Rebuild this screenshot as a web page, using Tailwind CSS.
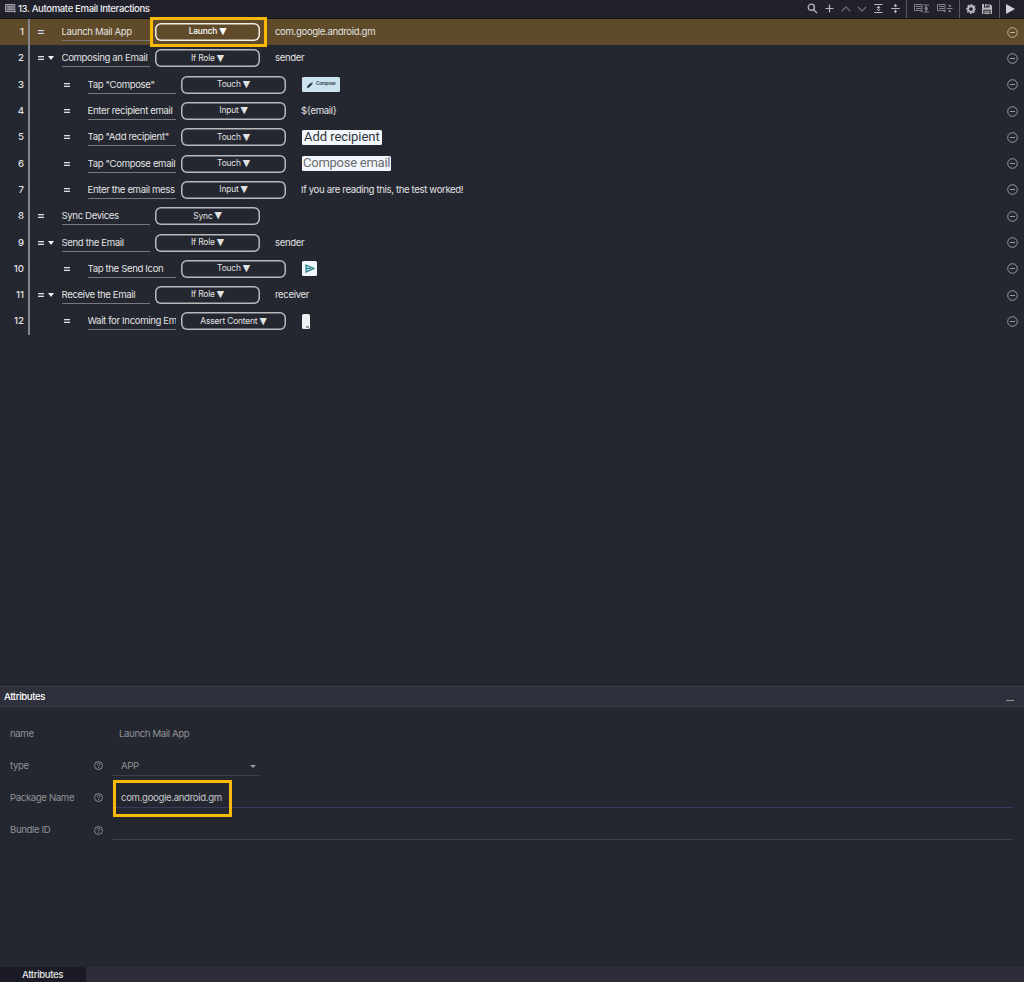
<!DOCTYPE html>
<html lang="en">
<head>
    <meta charset="UTF-8">
    <meta name="viewport" content="width=device-width, initial-scale=1.0">
    <title>13. Automate Email Interactions</title>
    <script src="https://cdn.jsdelivr.net/npm/@tailwindcss/browser@4"></script>
</head>
<body class="bg-[#24272f] text-[#e2e2e3] font-['Inter',sans-serif] text-[9.6px] leading-[14px] tracking-[-0.36px] overflow-hidden">

    <div id="app" class="flex flex-col h-[982px]">

        <header class="flex items-center h-[19px] shrink-0 bg-[#20212a] border-b border-[#16171e]">
            <svg class="ml-[5px] w-[11px] h-[9px] mb-[2px]" viewBox="0 0 11 9" fill="none" stroke="#a2a2a6"><path d="M.5.5h9.300v7H.5z" fill="#55565d"/><path d="M2 2.500h6.500M2 4h6.500M2 5.500h6.500" stroke-width=".9"/><path d="M8 7l2.500 2V7z" fill="#a2a2a6" stroke="none"/></svg>
            <h1 class="ml-[2px] mb-px font-medium text-[#ececee] tracking-[-0.38px]">13. Automate Email Interactions</h1>
            <div class="ml-auto flex items-center h-full text-[#b8b8bc]">
                <span class="w-[18px] mb-px flex justify-center"><svg class="w-[11px] h-[11px]" viewBox="0 0 11 11" fill="none" stroke="currentColor" stroke-width="1.300"><circle cx="4.300" cy="4.300" r="3.100"/><path d="M6.700 6.700l3.400 3.400"/></svg></span>
                <span class="w-[17px] mb-px flex justify-center"><svg class="w-[9px] h-[9px]" viewBox="0 0 9 9" fill="none" stroke="currentColor" stroke-width="1.200"><path d="M4.500.5v8M.5 4.500h8"/></svg></span>
                <span class="w-[16px] mb-px flex justify-center text-[#68696f]"><svg class="w-[10px] h-[6px]" viewBox="0 0 10 6" fill="none" stroke="currentColor" stroke-width="1.300"><path d="M.7 5.200L5 1l4.300 4.200"/></svg></span>
                <span class="w-[16px] mb-px flex justify-center text-[#68696f]"><svg class="w-[10px] h-[6px]" viewBox="0 0 10 6" fill="none" stroke="currentColor" stroke-width="1.300"><path d="M.7.8L5 5 9.300.8"/></svg></span>
                <span class="w-[17px] mb-px flex justify-center"><svg class="w-[9px] h-[9px]" viewBox="0 0 9 9" fill="none" stroke="currentColor"><path d="M.3.5h8.400M.3 8.500h8.400"/><path d="M4 3h1v3H4zM4.500 1.700L6.500 4h-4zM4.500 7.300L6.500 5h-4z" fill="currentColor" stroke="none"/></svg></span>
                <span class="w-[19px] mb-px flex justify-start pl-[4px]"><svg class="w-[9px] h-[9px]" viewBox="0 0 9 9" fill="none" stroke="currentColor"><path d="M.3 4.500h8.400"/><path d="M3.900 0h1.200v1.300h1.300L4.500 3.500 2.600 1.300h1.300zM3.900 9h1.200V7.700h1.300L4.500 5.500 2.600 7.700h1.300z" fill="currentColor" stroke="none"/></svg></span>
                <span class="w-px h-full bg-[#595a60]"></span>
                <span class="w-[28px] mb-px flex justify-center text-[#85868c]"><svg class="w-[15px] h-[9px]" viewBox="0 0 15 9" fill="none" stroke="currentColor"><path d="M.5.5h7.500v6H.5z"/><path d="M2 2.500h5M2 4.500h5"/><path d="M6 7h2.500v1.500z" fill="currentColor" stroke="none"/><path d="M9.500 1H15M9.500 8H15M12.200 1.500v6"/><path d="M12.200 2l1.900 2.500-1.900 2.500-1.900-2.500z" fill="currentColor" stroke="none"/></svg></span>
                <span class="w-[24px] mb-px flex justify-start pl-[2px] text-[#85868c]"><svg class="w-[16px] h-[9px]" viewBox="0 0 16 9" fill="none" stroke="currentColor"><path d="M.5.5h7.500v6H.5z"/><path d="M2 2.500h5M2 4.500h5"/><path d="M6 7h2.500v1.500z" fill="currentColor" stroke="none"/><path d="M10 4.500h5.500"/><path d="M11 1h3.500l-1.700 2.400zM11 8h3.500l-1.700-2.400z" fill="currentColor" stroke="none"/></svg></span>
                <span class="w-px h-full bg-[#595a60]"></span>
                <span class="w-[21px] mb-px flex justify-center"><svg class="w-[10px] h-[10px]" viewBox="0 0 10 10" fill="none" stroke="currentColor"><circle cx="5" cy="5" r="2.900" stroke-width="2.100"/><circle cx="5" cy="5" r="4.300" stroke-width="1.300" stroke-dasharray="1.700 1.677" stroke-dashoffset=".85"/></svg></span>
                <span class="w-[18px] mb-px flex justify-start pl-[1px]"><svg class="w-[10px] h-[10px]" viewBox="0 0 10 10" fill="currentColor"><path d="M0 0h2v3.500h5.500V0H8l2 2v8H8.600V5.800H1.400V10H0zM3 0h1.600v2.500H3zM5.600 0h1v2.500h-1zM2.300 6.800h5.400v.9H2.300zM2.300 8.600h5.400V10H2.300z"/></svg></span>
                <span class="w-px h-full bg-[#595a60]"></span>
                <span class="w-[24px] mb-px flex justify-start pl-[6px]"><svg class="w-[9px] h-[10px]" viewBox="0 0 8 9" fill="#d2d2d4"><path d="M0 0l8 4.500L0 9z"/></svg></span>
            </div>
        </header>

        <main id="steps" class="grow"></main>

        <section class="h-[281px] shrink-0 flex flex-col border-t border-[#3a3c44] text-[#909196]">
            <div class="flex items-center h-[20px] px-[4px] bg-[#2e303c] border-b border-[#393b44]">
                <h2 class="font-medium text-white">Attributes</h2>
                <span class="ml-auto mr-[6px] mt-[7px] w-[8px] h-px bg-[#9a9ba2]"></span>
            </div>
            <div class="pt-[11px] pr-[11px] pl-[10px]">
                <div class="flex items-center h-[32px]">
                    <span class="w-[109px]">name</span>
                    <span>Launch Mail App</span>
                </div>
                <div class="flex items-center h-[32px]">
                    <span class="w-[84px]">type</span>
                    <svg class="w-[9px] h-[9px] mb-px" viewBox="0 0 9 9" fill="none" stroke="currentColor" stroke-width=".9"><circle cx="4.500" cy="4.500" r="4"/><path d="M3.100 3.600C3.100 1.700 5.900 1.700 5.900 3.500c0 1-1.400 1-1.400 2M4.500 6.100v1"/></svg>
                    <div class="ml-[9px] w-[148px] h-[19px] flex items-center pl-[9px] pr-[4px] border-b border-[#3c3d50]">
                        <span class="mt-px">APP</span>
                        <svg class="ml-auto mt-px w-[6px] h-[3px]" viewBox="0 0 6 3" fill="#a0a0a4"><path d="M0 0h6L3 3z"/></svg>
                    </div>
                </div>
                <div class="flex items-center h-[32px]">
                    <span class="w-[84px]">Package Name</span>
                    <svg class="w-[9px] h-[9px] mb-px" viewBox="0 0 9 9" fill="none" stroke="currentColor" stroke-width=".9"><circle cx="4.500" cy="4.500" r="4"/><path d="M3.100 3.600C3.100 1.700 5.900 1.700 5.900 3.500c0 1-1.400 1-1.400 2M4.500 6.100v1"/></svg>
                    <div class="relative ml-[9px] grow h-[19px] flex items-center pl-[9px] border-b border-[#3a3b5c]">
                        <span class="mt-px text-[#c9c9cc] tracking-[-0.33px]">com.google.android.gm</span>
                        <span class="absolute left-[1px] -top-[9px] w-[119px] h-[37px] border-3 border-[#fbb904]"></span>
                    </div>
                </div>
                <div class="flex items-center h-[32px]">
                    <span class="w-[84px]">Bundle ID</span>
                    <svg class="w-[9px] h-[9px]" viewBox="0 0 9 9" fill="none" stroke="currentColor" stroke-width=".9"><circle cx="4.500" cy="4.500" r="4"/><path d="M3.100 3.600C3.100 1.700 5.900 1.700 5.900 3.500c0 1-1.400 1-1.400 2M4.500 6.100v1"/></svg>
                    <div class="ml-[9px] grow h-[19px] border-b border-[#3c3d50]"></div>
                </div>
            </div>
        </section>

        <footer class="flex h-[15px] shrink-0 bg-[#2c2d39]">
            <div class="w-[86px] pt-px pl-[22px] bg-[#1a1b24] font-medium text-[#e4e4e6]">Attributes</div>
        </footer>

    </div>

    <script>
        const images = {
            compose: `<div class="ml-[1px] w-[38px] h-[15px] rounded-[1.500px] bg-[#cbe4f0] flex items-center pl-[5px] text-[4.500px] leading-none tracking-[-0.200px] font-bold text-[#3a4c57]">
                <svg class="w-[6px] h-[6px] mr-[3px]" viewBox="0 0 5 5" fill="#1d2c35"><path d="M0 5l.4-1.600L3.200.6l1.200 1.200-2.800 2.800zM3.600.3L4 0l1 1-.3.400z"/></svg>Compose</div>`,
            recipient: `<div class="ml-[1px] w-[80px] h-[15px] rounded-[1.500px] bg-[#f3f7fc] pl-[2px] font-['Roboto'] text-[13px] leading-[13px] tracking-[-0.05px] text-[#30343a] whitespace-nowrap">Add recipient</div>`,
            email: `<div class="ml-[1px] w-[89px] h-[15px] rounded-[1.500px] bg-[#f3f7fc] pl-[1px] font-['Roboto'] text-[13px] leading-[13px] tracking-[-0.25px] text-[#6a6d70] whitespace-nowrap">Compose email</div>`,
            send: `<div class="ml-[1px] w-[15px] h-[15px] rounded-[1.500px] bg-[#f0f6fb] flex items-center justify-center">
                <svg class="w-[10px] h-[9px]" viewBox="0 0 10 9" fill="#a9d0d4" stroke="#2b8189" stroke-width="1.200"><path d="M1 1l8 3.500L1 8zM1 4.500h5"/></svg></div>`,
            phone: `<div class="ml-[1px] w-[8px] h-[15px] rounded-[1.500px] bg-[#eeeff1] flex items-end justify-end p-[1px]"><span class="w-[3px] h-[2px] bg-[#96989d]"></span></div>`
        };

        const steps = [
            { name: 'Launch Mail App', action: 'Launch', value: 'com.google.android.gm', selected: true },
            { name: 'Composing an Email', action: 'If Role', value: 'sender', group: true },
            { name: 'Tap "Compose"', action: 'Touch', image: 'compose', child: true },
            { name: 'Enter recipient email', action: 'Input', value: '${email}', child: true },
            { name: 'Tap "Add recipient"', action: 'Touch', image: 'recipient', child: true },
            { name: 'Tap "Compose email', action: 'Touch', image: 'email', child: true },
            { name: 'Enter the email mess', action: 'Input', value: 'If you are reading this, the test worked!', child: true },
            { name: 'Sync Devices', action: 'Sync' },
            { name: 'Send the Email', action: 'If Role', value: 'sender', group: true },
            { name: 'Tap the Send Icon', action: 'Touch', image: 'send', child: true },
            { name: 'Receive the Email', action: 'If Role', value: 'receiver', group: true },
            { name: 'Wait for Incoming Em', action: 'Assert Content', image: 'phone', child: true }
        ];

        document.getElementById('steps').innerHTML = steps.map((step, i) => `
            <div class="flex items-center h-[26.300px] ${step.selected ? 'bg-[#5f4a29]' : ''}">
                <span class="w-[24px] text-right font-medium tracking-normal">${i + 1}</span>
                <span class="ml-[4px] w-[2px] h-full bg-[#85868b]"></span>
                <span class="${step.child ? 'ml-[34px]' : 'ml-[8px]'} w-[6px] h-[4px] border-y border-[#dededf] bg-[#5c5e64]"></span>
                <span class="w-[17.500px] pl-[4px]">${step.group ? '<svg class="w-[6px] h-[4px]" viewBox="0 0 6 4" fill="#f2f2f3"><path d="M0 0h6L3 4z"/></svg>' : ''}</span>
                <span class="w-[88px] h-[17px] mt-px leading-[15px] overflow-hidden whitespace-nowrap border-b border-[#77787d]">${step.name}</span>
                <button class="relative ml-[5.500px] w-[105px] h-[18px] pb-px flex items-center justify-center gap-[2px] rounded-[6px] text-[8.400px] leading-none tracking-[-0.150px] ${step.selected ? 'shadow-[inset_0_0_0_1.500px_#f2eee6] text-white font-medium' : 'shadow-[inset_0_0_0_1.500px_#b9b9bc]'}">${step.action}<span class="mb-px font-['DejaVu_Sans'] text-[9.500px]">▼</span>
                    ${step.selected ? '<span class="absolute -left-[5px] -top-[6px] w-[117px] h-[30px] border-3 border-[#fbb904]"></span>' : ''}
                </button>
                <span class="ml-[15px]">${step.image ? images[step.image] : step.value || ''}</span>
                <svg class="ml-auto mr-[6px] w-[11px] h-[11px] ${step.selected ? 'text-[#c0b29c]' : 'text-[#9a9ba0]'}" viewBox="0 0 11 11" fill="none" stroke="currentColor"><circle cx="5.500" cy="5.500" r="4.800"/><path d="M3 5.500h5"/></svg>
            </div>
        `).join('');
    </script>
</body>
</html>
